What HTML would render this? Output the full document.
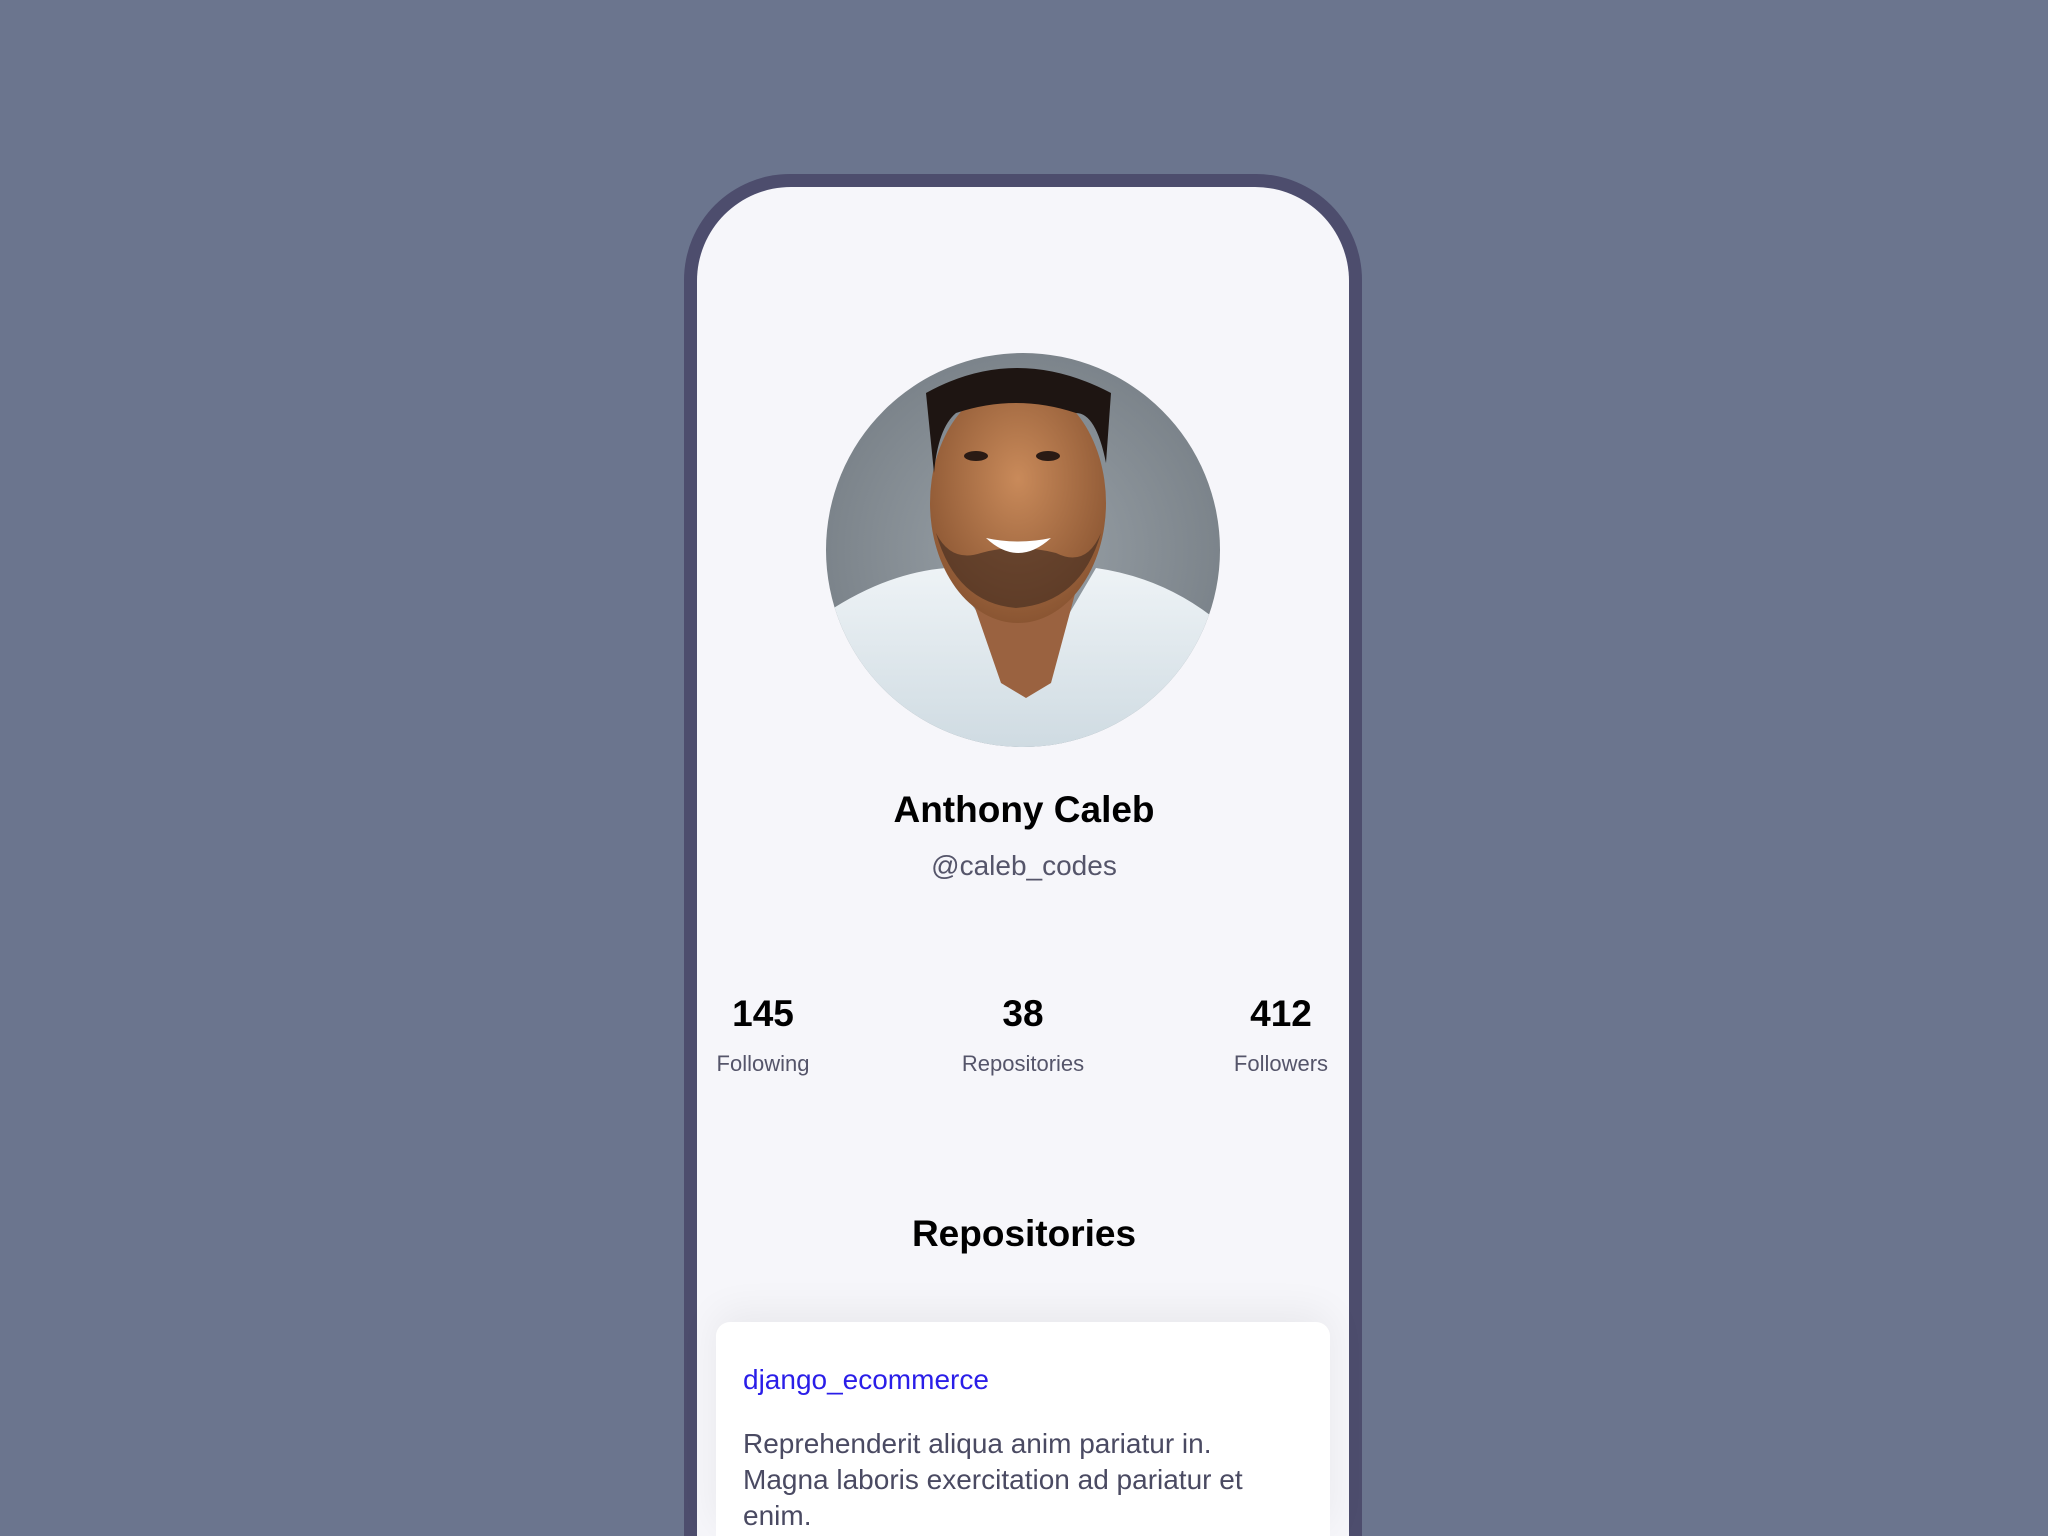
<!DOCTYPE html>
<html style="width:2048px;height:1536px;overflow:hidden;"><head><meta charset="utf-8"><style>
html,body{margin:0;padding:0;}
body{width:2048px;height:1536px;background:#6b758e;position:relative;overflow:hidden;font-family:"Liberation Sans",sans-serif;}
.phone{position:absolute;left:684px;top:174px;width:678px;height:1362px;background:#4d4d6d;border-radius:106px 106px 0 0;}
.screen{position:absolute;left:697px;top:187px;width:652px;height:1349px;background:#f6f6fa;border-radius:94px 94px 0 0;overflow:hidden;}
.av{position:absolute;left:826px;top:353px;width:394px;height:394px;border-radius:50%;overflow:hidden;background:radial-gradient(circle at 50% 50%,#9aa2a8,#7c848b 70%,#5f666c);}
.t{position:absolute;width:100%;text-align:center;left:0;}
.card{position:absolute;left:716px;top:1322px;width:614px;height:214px;background:#fff;border-radius:14px 14px 0 0;box-shadow:0 -10px 40px rgba(0,0,0,0.06);overflow:hidden;}
</style></head><body>
<div class="phone"></div>
<div class="screen"></div>
<div class="av">
<svg width="394" height="394" viewBox="0 0 394 394">
<defs><radialGradient id="sk" cx="50%" cy="40%" r="60%"><stop offset="0" stop-color="#c98a5a"/><stop offset="1" stop-color="#8a5532"/></radialGradient>
<linearGradient id="sh" x1="0" y1="0" x2="0" y2="1"><stop offset="0" stop-color="#eef3f6"/><stop offset="1" stop-color="#cfdbe2"/></linearGradient></defs>
<path d="M0 260 Q60 220 120 215 L180 300 L200 340 L220 300 L270 215 Q340 225 394 270 L394 394 L0 394Z" fill="url(#sh)"/>
<path d="M130 200 L175 330 L200 345 L225 330 L260 200Z" fill="#9a6240"/>
<ellipse cx="192" cy="150" rx="88" ry="120" fill="url(#sk)"/>
<path d="M100 40 Q190 -10 285 40 L280 110 Q270 60 250 60 Q190 40 130 60 Q112 75 108 120Z" fill="#1e1512"/>
<ellipse cx="150" cy="103" rx="12" ry="5" fill="#2a1a14"/><ellipse cx="222" cy="103" rx="12" ry="5" fill="#2a1a14"/>
<path d="M110 180 Q130 250 190 255 Q255 250 275 180 Q260 215 230 200 Q190 190 155 200 Q125 210 110 180Z" fill="#4a3022" opacity="0.7"/>
<path d="M160 185 Q192 215 225 185 Q192 192 160 185Z" fill="#fff"/>
</svg>
</div>
<div class="t" style="top:789px;font-size:37px;font-weight:bold;color:#000;">Anthony Caleb</div>
<div class="t" style="top:850px;font-size:28px;color:#55556a;">@caleb_codes</div>
<div style="position:absolute;left:663px;top:993px;width:200px;text-align:center;font-size:37px;font-weight:bold;">145</div>
<div style="position:absolute;left:663px;top:1051px;width:200px;text-align:center;font-size:22px;color:#55556a;">Following</div>
<div style="position:absolute;left:923px;top:993px;width:200px;text-align:center;font-size:37px;font-weight:bold;">38</div>
<div style="position:absolute;left:923px;top:1051px;width:200px;text-align:center;font-size:22px;color:#55556a;">Repositories</div>
<div style="position:absolute;left:1181px;top:993px;width:200px;text-align:center;font-size:37px;font-weight:bold;">412</div>
<div style="position:absolute;left:1181px;top:1051px;width:200px;text-align:center;font-size:22px;color:#55556a;">Followers</div>
<div class="t" style="top:1213px;font-size:37px;font-weight:bold;">Repositories</div>
<div class="card">
<div style="position:absolute;left:27px;top:42px;font-size:28px;color:#2a1ee8;">django_ecommerce</div>
<div style="position:absolute;left:27px;top:104px;width:580px;font-size:28px;line-height:36px;color:#4a4a62;white-space:nowrap;">Reprehenderit aliqua anim pariatur in.<br>Magna laboris exercitation ad pariatur et<br>enim.</div>
</div>
</body></html>
